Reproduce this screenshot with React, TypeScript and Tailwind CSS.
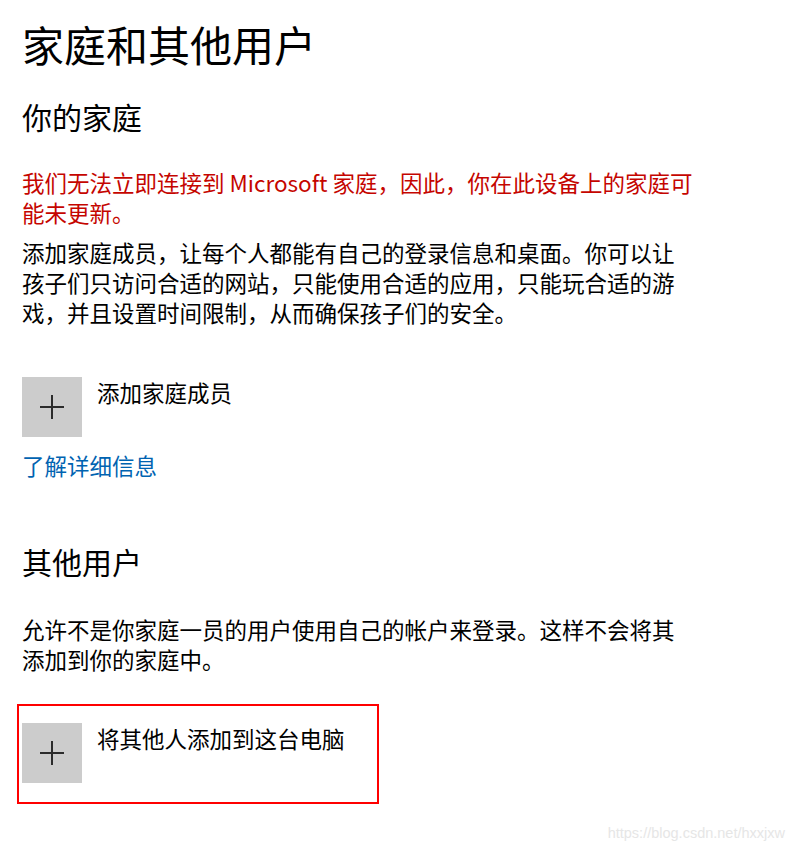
function PlusTile() {
  return (
    <div className="flex h-[60px] w-[60px] shrink-0 items-center justify-center bg-[#cccccc]">
      <svg width="24" height="24" viewBox="0 0 24 24" fill="none">
        <path d="M12 0v24M0 12h24" stroke="#2b2b2b" strokeWidth="2" />
      </svg>
    </div>
  );
}

function AddRow({ label }: { label: string }) {
  return (
    <div className="flex items-start gap-[15px]">
      <PlusTile />
      <span className="text-[22.5px] leading-[30px] text-black">{label}</span>
    </div>
  );
}

export default function App() {
  return (
    <div className="relative min-h-[855px] w-[796px] overflow-hidden bg-white font-['Noto_Sans_CJK_SC',sans-serif] text-black">
      <div className="flex flex-col pl-[22px] pt-[16px]">
        <h1 className="text-[42px] leading-[56px] font-normal">家庭和其他用户</h1>

        <h2 className="mt-[24px] text-[30px] leading-[40px] font-normal">你的家庭</h2>

        <p className="mt-[31px] whitespace-nowrap text-[22.5px] leading-[30px] text-[#c50500]">
          我们无法立即连接到 Microsoft 家庭，因此，你在此设备上的家庭可
          <br />
          能未更新。
        </p>

        <p className="mt-[10px] whitespace-nowrap text-[22.5px] leading-[30px]">
          添加家庭成员，让每个人都能有自己的登录信息和桌面。你可以让
          <br />
          孩子们只访问合适的网站，只能使用合适的应用，只能玩合适的游
          <br />
          戏，并且设置时间限制，从而确保孩子们的安全。
        </p>

        <div className="mt-[50px]">
          <AddRow label="添加家庭成员" />
        </div>

        <a className="mt-[13px] w-fit text-[22.5px] leading-[30px] text-[#0063b1]">了解详细信息</a>

        <h2 className="mt-[61px] text-[30px] leading-[40px] font-normal">其他用户</h2>

        <p className="mt-[33px] whitespace-nowrap text-[22.5px] leading-[30px]">
          允许不是你家庭一员的用户使用自己的帐户来登录。这样不会将其
          <br />
          添加到你的家庭中。
        </p>

        <div className="-ml-[5px] mt-[30px] w-[362px] border-2 border-[#ff0000] pb-[19px] pl-[3px] pt-[17px]">
          <AddRow label="将其他人添加到这台电脑" />
        </div>
      </div>

      <span className="absolute bottom-[10px] right-[11px] font-['Liberation_Sans',sans-serif] text-[14.5px] text-[#e6e6e6]">
        https://blog.csdn.net/hxxjxw
      </span>
    </div>
  );
}
